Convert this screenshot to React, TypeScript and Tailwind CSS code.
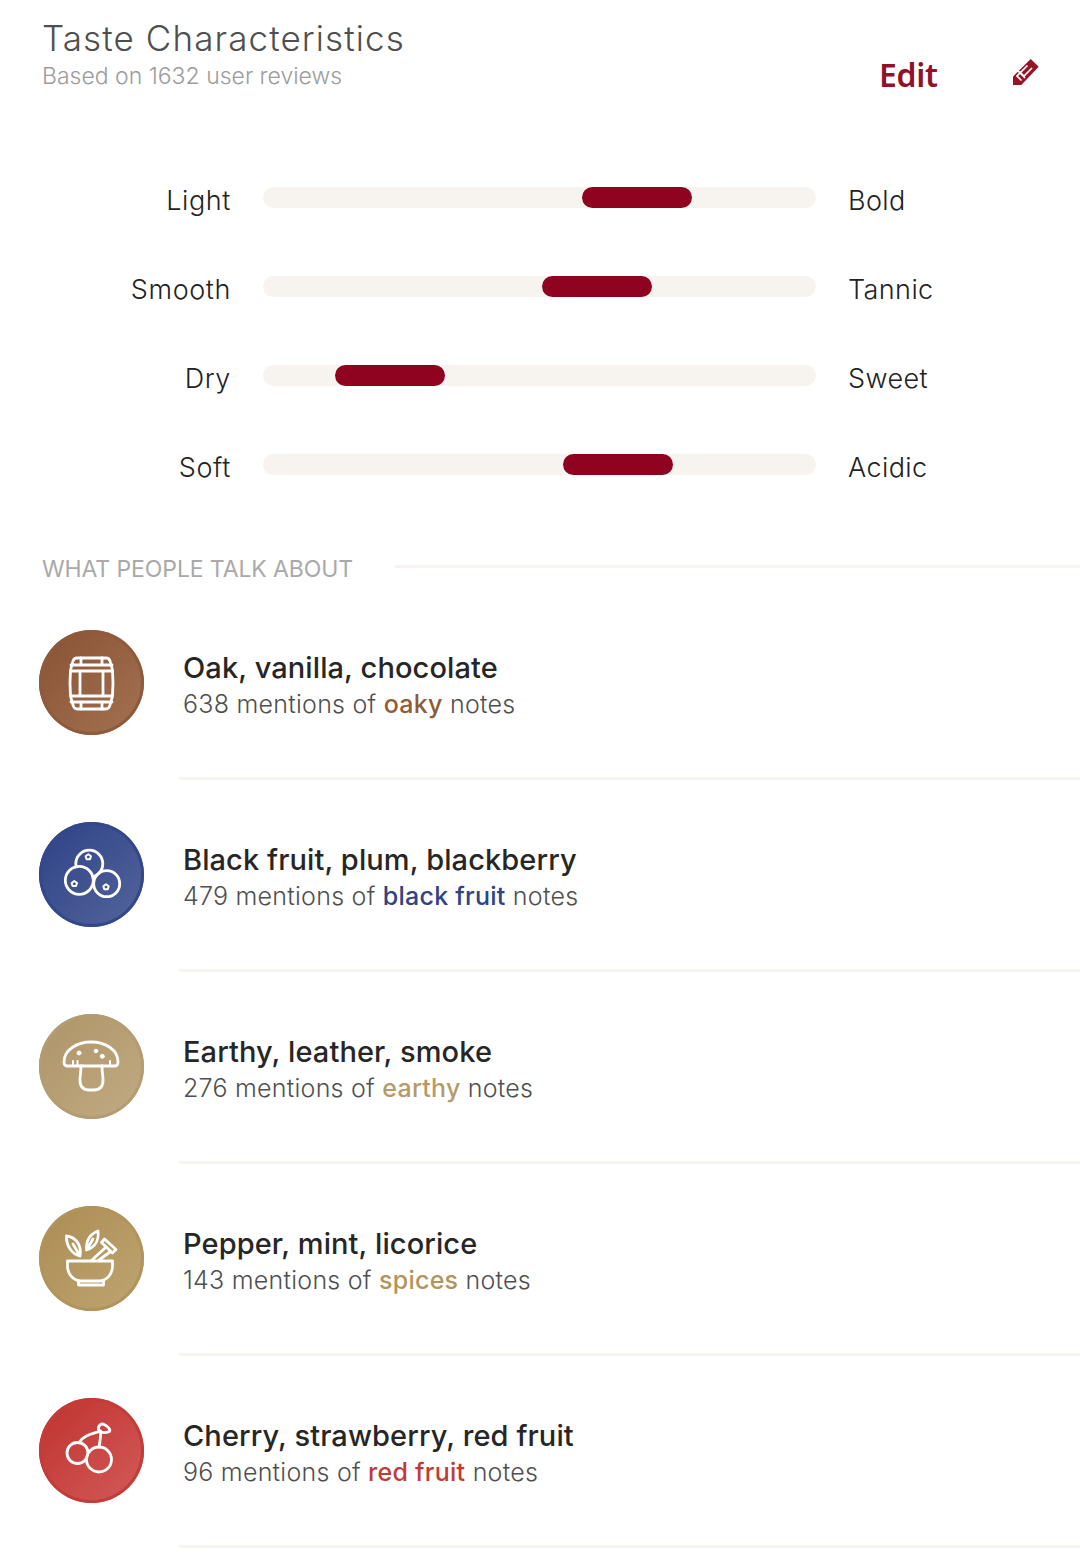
import type { ReactNode } from 'react';

const font = { fontFamily: 'Inter, "Open Sans", sans-serif' };

const sliders = [
  { left: 'Light', right: 'Bold', offset: 319 },
  { left: 'Smooth', right: 'Tannic', offset: 279 },
  { left: 'Dry', right: 'Sweet', offset: 72 },
  { left: 'Soft', right: 'Acidic', offset: 300 },
];

function Barrel() {
  return (
    <g>
      <path d="M38 28H67Q70 28 71 31L73.5 40Q74.5 53 73.5 66L71 75Q70 79 67 79H38Q35 79 34 75L31.5 66Q30.5 53 31.5 40L34 31Q35 28 38 28Z" />
      <path d="M32 35H73M32 41H73M32 66H73M32 72H73M41 41V66M64 41V66M42 28V35M63 28V35M42 72V79M63 72V79" />
    </g>
  );
}

function Berries() {
  return (
    <g>
      <mask id="berry-top">
        <rect width="105" height="105" fill="white" />
        <circle cx="40.3" cy="58.3" r="14" fill="black" />
        <circle cx="67.7" cy="61.7" r="13" fill="black" />
      </mask>
      <mask id="berry-right">
        <rect width="105" height="105" fill="white" />
        <circle cx="40.3" cy="58.3" r="14" fill="black" />
      </mask>
      <circle cx="50.3" cy="41.7" r="13.5" mask="url(#berry-top)" />
      <circle cx="40.3" cy="58.3" r="14" />
      <circle cx="67.7" cy="61.7" r="13" mask="url(#berry-right)" />
      <path strokeWidth="2" d="M49.3 32.3L52 34.2L51 37.3H47.6L46.6 34.2Z" />
      <path strokeWidth="2" d="M35.3 59L38 61L37 64H33.6L32.6 61Z" />
      <path strokeWidth="2" d="M67 62.3L69.7 64.3L68.7 67.3H65.3L64.3 64.3Z" />
    </g>
  );
}

function Mushroom() {
  return (
    <g>
      <path d="M28 52Q25 52 25 48C25 36 38 28 52 28C67 28 79 36 79 48Q79 52 76 52Z" />
      <path d="M42 52C42 58 41 62 41 66Q41 76 50 76H55Q64 76 64 66C64 62 63 58 63 52" />
      <path d="M34 47V52M38.5 47V52M71 47V52" strokeWidth="2" />
      <circle cx="40" cy="39" r="2" fill="white" strokeWidth="1" />
      <circle cx="57" cy="37" r="1.8" fill="white" strokeWidth="1" />
      <circle cx="63.3" cy="42.3" r="2" fill="white" strokeWidth="1" />
    </g>
  );
}

function Mortar() {
  return (
    <g>
      <path d="M28.5 55H73.5V60C73.5 68 68 74 61 75H41C34 74 28.5 68 28.5 60Z" />
      <path d="M39.5 75V79H64.5V75" />
      <path d="M41 50C33 48 27 40 27.5 30C36 31 43 38 41 50ZM34 38L41 50" />
      <path d="M47.5 44C47 35 51 28 59 25C60 33 57 41 47.5 44ZM54 33L47.5 44" />
      <path d="M53 54L66 42M60 54L71 46" />
      <path d="M65.5 33L77 43.5L73.5 47L62.5 36.5Z" />
    </g>
  );
}

function Cherry() {
  return (
    <g>
      <mask id="cherry-left">
        <rect width="105" height="105" fill="white" />
        <circle cx="60" cy="61.5" r="12.5" fill="black" />
      </mask>
      <circle cx="38.5" cy="55" r="10.5" mask="url(#cherry-left)" />
      <circle cx="60" cy="61.5" r="12.5" />
      <path d="M40 44.5C46 36 54 36 61.5 33C62 39 61 44 60 49" />
      <path d="M60 33C58 28 62 25 65 26.5C68 28 72 31 70.5 33.5C67 35 62 35 60 33Z" />
    </g>
  );
}

const talks: { title: string; count: number; word: string; color: string; circle: string; icon: ReactNode }[] = [
  {
    title: 'Oak, vanilla, chocolate',
    count: 638,
    word: 'oaky',
    color: 'text-[#8f5c36]',
    circle: 'from-[#875233] to-[#a47252] ring-[#8d5b3c]',
    icon: <Barrel />,
  },
  {
    title: 'Black fruit, plum, blackberry',
    count: 479,
    word: 'black fruit',
    color: 'text-[#2f4484]',
    circle: 'from-[#2f4186] to-[#52659b] ring-[#344789]',
    icon: <Berries />,
  },
  {
    title: 'Earthy, leather, smoke',
    count: 276,
    word: 'earthy',
    color: 'text-[#b59a69]',
    circle: 'from-[#ad9468] to-[#c2aa83] ring-[#b39c71]',
    icon: <Mushroom />,
  },
  {
    title: 'Pepper, mint, licorice',
    count: 143,
    word: 'spices',
    color: 'text-[#b2955a]',
    circle: 'from-[#ab8c52] to-[#c0a572] ring-[#b1945c]',
    icon: <Mortar />,
  },
  {
    title: 'Cherry, strawberry, red fruit',
    count: 96,
    word: 'red fruit',
    color: 'text-[#c13a36]',
    circle: 'from-[#bf302d] to-[#d25a58] ring-[#c43c38]',
    icon: <Cherry />,
  },
];

function PencilIcon() {
  return (
    <svg viewBox="0 0 26 26" className="w-[26px] h-[26px]">
      <path d="M17.7 0L25.7 7.7L8.3 26H0V17.5Z" fill="#971428" />
      <path d="M8.5 21.5L4 17L14.5 6.5M6.5 12.5L11 17L19 9M12 19L5 12" fill="none" stroke="white" strokeWidth="1.7" />
    </svg>
  );
}

export default function App() {
  return (
    <div className="w-[1080px] h-[1562px] bg-white overflow-hidden" style={font}>
      <div className="flex items-start pl-[42px] pt-[16px]">
        <div className="w-[837px]">
          <h1 className="h-[43px] text-[35px] leading-[44px] font-light tracking-[1.1px] text-[#4f4f4f]">Taste Characteristics</h1>
          <p className="text-[23px] leading-[34px] font-light text-[#9c9c9c]">Based on 1632 user reviews</p>
        </div>
        <span className="mt-[39px] text-[32px] leading-[40px] font-semibold tracking-[-0.3px] text-[#8e1229]" style={{ fontFamily: '"Noto Sans", sans-serif' }}>
          Edit
        </span>
        <div className="ml-[75px] mt-[43px]">
          <PencilIcon />
        </div>
      </div>

      <div className="flex flex-col gap-[68px] mt-[92px]">
        {sliders.map((s) => (
          <div key={s.left} className="flex items-start h-[21px]">
            <span className="w-[231px] text-right text-[27px] leading-[28px] font-light tracking-[0.6px] text-[#222222]">{s.left}</span>
            <div className="relative ml-[32px] w-[553px] h-[21px] rounded-full bg-[#f7f4ef]">
              <div className="absolute top-0 h-[21px] w-[110px] rounded-full bg-[#8f0220]" style={{ left: s.offset }} />
            </div>
            <span className="ml-[32px] text-[27px] leading-[28px] font-light tracking-[0.4px] text-[#222222]">{s.right}</span>
          </div>
        ))}
      </div>

      <div className="flex items-center pl-[42px] mt-[79px] h-[30px]">
        <span className="text-[23px] leading-[30px] tracking-[-0.1px] text-[#a9a9a9]">WHAT PEOPLE TALK ABOUT</span>
        <div className="flex-1 h-[3px] ml-[42px] -mt-[5px] bg-[#f7f4ef]" />
      </div>

      <div className="mt-[46px] pl-[39px]">
        {talks.map((t) => (
          <div key={t.title} className="flex h-[192px]">
            <div className={`w-[105px] h-[105px] shrink-0 rounded-full ring-[3px] ring-inset bg-gradient-to-br ${t.circle}`}>
              <svg viewBox="0 0 105 105" className="w-full h-full" fill="none" stroke="white" strokeWidth="2.8" strokeLinecap="round" strokeLinejoin="round">
                {t.icon}
              </svg>
            </div>
            <div className="flex-1 ml-[35px] pl-[4px] h-[150px] border-b-[3px] border-[#f7f5f1]">
              <div className="pt-[20px] text-[29px] leading-[36px] font-medium tracking-[0.1px] text-[#262626]">{t.title}</div>
              <div className="text-[25px] leading-[36px] font-light tracking-[0.25px] text-[#4f4f4f]">
                {t.count} mentions of <span className={`font-medium ${t.color}`}>{t.word}</span> notes
              </div>
            </div>
          </div>
        ))}
      </div>
    </div>
  );
}
